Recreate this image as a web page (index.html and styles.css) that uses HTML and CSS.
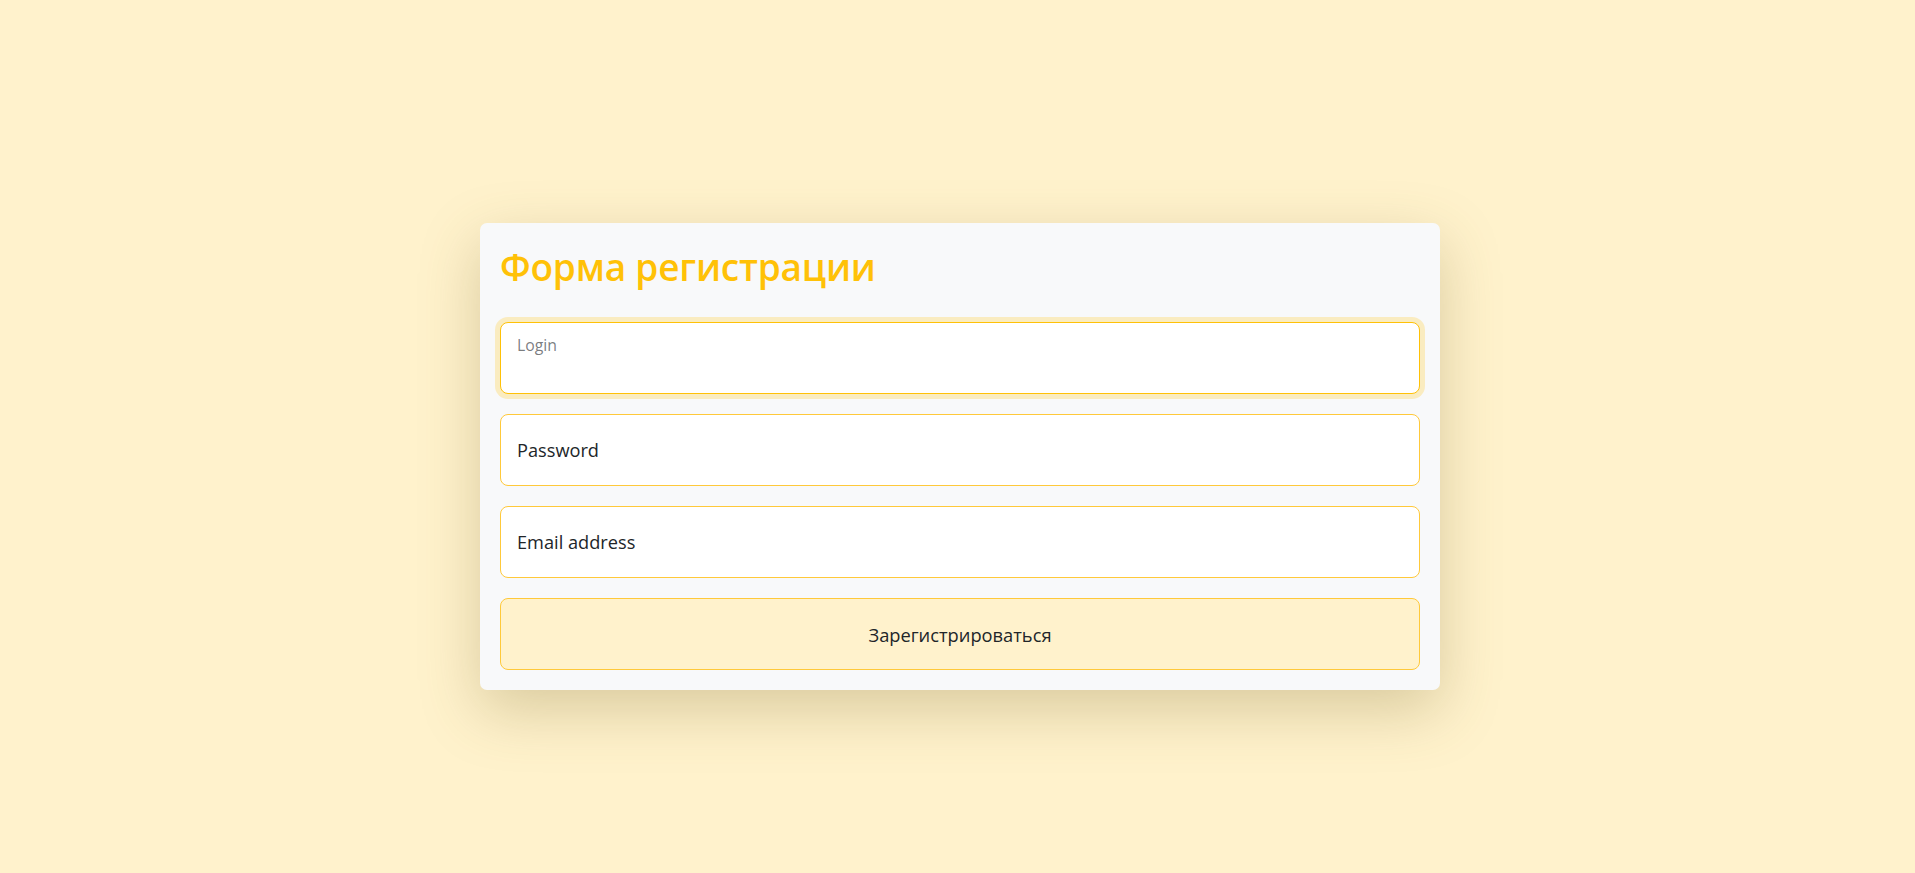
FILE: index.html
```html
<!DOCTYPE html>
<html lang="ru">
<head>
<meta charset="utf-8">
<title>Форма регистрации</title>
<link rel="stylesheet" href="styles.css">
</head>
<body>
<main class="page">
  <form class="card">
    <h2 class="title">Форма регистрации</h2>
    <div class="field field-focus">
      <span class="float-label">Login</span>
    </div>
    <div class="field">
      <span class="label">Password</span>
    </div>
    <div class="field">
      <span class="label">Email address</span>
    </div>
    <button type="button" class="submit">Зарегистрироваться</button>
  </form>
</main>
</body>
</html>
```
FILE: styles.css
```css
* { box-sizing: border-box; }
html, body { margin: 0; height: 100%; }
body {
  background: #fff2cc;
  font-family: "Open Sans", "Noto Sans", sans-serif;
  color: #212529;
}
.page {
  min-height: 873px;
  display: flex;
  align-items: center;
  justify-content: center;
  padding: 40px 0 0 5px;
}
.card {
  width: 960px;
  background: #f8f9fa;
  border-radius: 7px;
  padding: 20px;
  display: flex;
  flex-direction: column;
  gap: 20px;
  box-shadow: 0 20px 60px rgba(120, 100, 40, 0.28);
}
.title {
  margin: 0 0 11px;
  font-size: 37px;
  line-height: 48px;
  font-weight: 600;
  color: #ffc107;
  letter-spacing: -0.2px;
}
.field {
  height: 72px;
  background: #fff;
  border: 1px solid #ffc93a;
  border-radius: 8px;
  padding: 0 16px;
  display: flex;
  align-items: center;
  font-size: 18.2px;
}
.field-focus {
  align-items: flex-start;
  border-color: #ffc107;
  box-shadow: 0 0 0 5px rgba(255, 206, 60, 0.3);
}
.float-label {
  margin-top: 11px;
  font-size: 15.8px;
  color: rgba(33, 37, 41, 0.6);
}
.label { color: #212529; }
.submit {
  height: 72px;
  background: #fff2cc;
  border: 1px solid #ffc93a;
  border-radius: 8px;
  font-family: inherit;
  font-size: 18.3px;
  color: #212529;
}
```
